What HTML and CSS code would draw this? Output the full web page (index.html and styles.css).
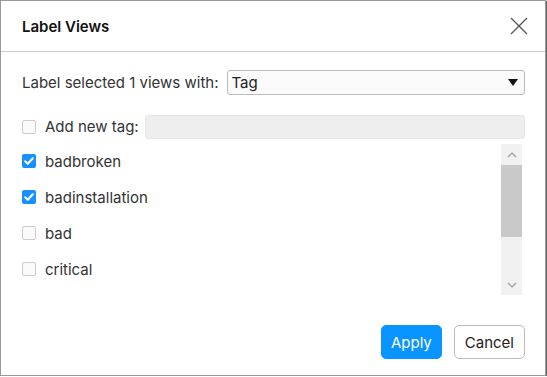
FILE: index.html
```html
<!DOCTYPE html>
<html lang="en">
<head>
    <meta charset="UTF-8">
    <title>Label Views</title>
    <link rel="stylesheet" href="styles.css">
</head>
<body>
    <div class="dialog">
        <div class="dialog-header">
            <span class="dialog-title">Label Views</span>
            <svg class="close-icon" width="18" height="18" viewBox="0 0 18 18">
                <path d="M1 1 L17 17 M17 1 L1 17" stroke="#555" stroke-width="1.3" fill="none"/>
            </svg>
        </div>

        <div class="dialog-body">
            <div class="row">
                <span class="row-label">Label selected 1 views with:</span>
                <div class="select-box">
                    <span>Tag</span>
                    <span class="select-arrow"></span>
                </div>
            </div>

            <div class="row new-tag">
                <span class="checkbox"></span>
                <span class="row-label">Add new tag:</span>
                <div class="text-input"></div>
            </div>

            <div class="tag-list">
                <div class="tag-items">
                    <div class="tag-item">
                        <span class="checkbox checked">
                            <svg width="14" height="14" viewBox="0 0 14 14"><path d="M3.2 7.2 L5.8 9.7 L10.8 4.3" stroke="#fff" stroke-width="2" fill="none" stroke-linecap="round" stroke-linejoin="round"/></svg>
                        </span>
                        <span>badbroken</span>
                    </div>
                    <div class="tag-item">
                        <span class="checkbox checked">
                            <svg width="14" height="14" viewBox="0 0 14 14"><path d="M3.2 7.2 L5.8 9.7 L10.8 4.3" stroke="#fff" stroke-width="2" fill="none" stroke-linecap="round" stroke-linejoin="round"/></svg>
                        </span>
                        <span>badinstallation</span>
                    </div>
                    <div class="tag-item">
                        <span class="checkbox"></span>
                        <span>bad</span>
                    </div>
                    <div class="tag-item">
                        <span class="checkbox"></span>
                        <span>critical</span>
                    </div>
                </div>

                <!-- scrollbar -->
                <div class="scrollbar">
                    <div class="scroll-btn">
                        <svg width="10" height="6" viewBox="0 0 10 6"><path d="M1 5 L5 1 L9 5" stroke="#999" stroke-width="1.2" fill="none"/></svg>
                    </div>
                    <div class="scroll-thumb"></div>
                    <div class="scroll-track"></div>
                    <div class="scroll-btn">
                        <svg width="10" height="6" viewBox="0 0 10 6"><path d="M1 1 L5 5 L9 1" stroke="#999" stroke-width="1.2" fill="none"/></svg>
                    </div>
                </div>
            </div>
        </div>

        <div class="dialog-footer">
            <button class="btn btn-primary">Apply</button>
            <button class="btn">Cancel</button>
        </div>
    </div>
</body>
</html>
```

FILE: styles.css
```css
body {
    margin: 0;
    font-family: Inter, "Noto Sans", sans-serif;
    font-size: 15px;
    color: #333;
    background-color: #fff;
}

.dialog {
    box-sizing: border-box;
    width: 546px;
    height: 376px;
    border: 1px solid #999;
    box-shadow: 1px 1px 1px rgba(0, 0, 0, 0.6);
    background-color: #fff;
    display: flex;
    flex-direction: column;
}

.dialog-header {
    height: 50px;
    border-bottom: 1px solid #ccc;
    display: flex;
    align-items: center;
    justify-content: space-between;
    padding: 0 17px 0 21px;
}

.dialog-title {
    font-weight: 600;
    color: #111;
}

.dialog-body {
    padding: 18px 20px 0 21px;
}

.row {
    display: flex;
    align-items: center;
    height: 25px;
}

.row-label {
    margin-right: 9px;
}

.select-box {
    flex: 1;
    height: 23px;
    border: 1px solid #bbb;
    border-radius: 3px;
    background-color: #fafafa;
    display: flex;
    align-items: center;
    justify-content: space-between;
    padding: 0 6px 0 3px;
    color: #222;
}

.select-arrow {
    width: 0;
    height: 0;
    border-left: 5px solid transparent;
    border-right: 5px solid transparent;
    border-top: 7px solid #111;
}

.new-tag {
    margin-top: 19px;
}

.new-tag .row-label {
    margin-right: 6px;
}

.text-input {
    flex: 1;
    height: 22px;
    border: 1px solid #e6e6e6;
    border-radius: 3px;
    background-color: #eee;
}

.checkbox {
    box-sizing: border-box;
    width: 14px;
    height: 14px;
    border: 1px solid #ccc;
    border-radius: 2px;
    background-color: #fafafa;
    margin-right: 9px;
    flex-shrink: 0;
    display: inline-flex;
}

.checkbox.checked {
    border: none;
    background-color: #1890ff;
}

.tag-list {
    display: flex;
    margin-top: 5px;
    height: 151px;
}

.tag-items {
    flex: 1;
    margin-top: -1px;
}

.tag-item {
    height: 36px;
    display: flex;
    align-items: center;
}

.scrollbar {
    width: 21px;
    margin-right: 3px;
    display: flex;
    flex-direction: column;
    background-color: #f1f1f1;
}

.scroll-btn {
    height: 21px;
    display: flex;
    align-items: center;
    justify-content: center;
}

.scroll-thumb {
    height: 72px;
    background-color: #c9c9c9;
}

.scroll-track {
    flex: 1;
}

.dialog-footer {
    margin-top: auto;
    display: flex;
    justify-content: flex-end;
    gap: 12px;
    padding: 0 20px 16px 0;
}

.btn {
    font-family: Inter, "Noto Sans", sans-serif;
    font-size: 15px;
    height: 34px;
    padding: 0 10px;
    border: 1px solid #bbb;
    border-radius: 5px;
    background-color: #fff;
    color: #222;
}

.btn-primary {
    background-color: #0a94ff;
    border-color: #0a94ff;
    color: #fff;
    padding: 0 9px;
}
```
